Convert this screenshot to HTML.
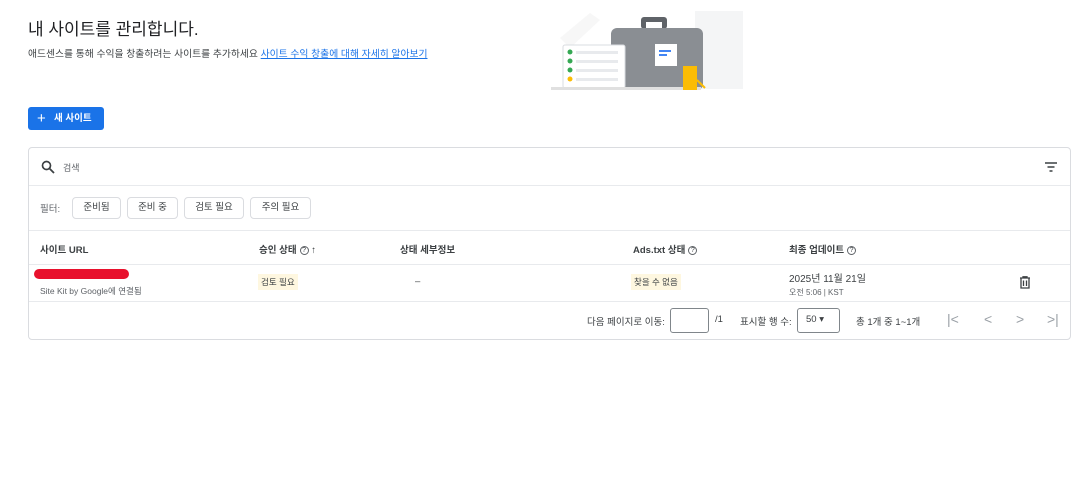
<!DOCTYPE html>
<html><head><meta charset="utf-8"><style>
*{box-sizing:border-box;margin:0;padding:0}
body{width:1086px;height:488px;background:#fff;font-family:"Liberation Sans","Noto Sans CJK KR",sans-serif;color:#202124;position:relative;overflow:hidden}
.abs{position:absolute}
h1{position:absolute;left:28px;top:15px;font-size:17px;font-weight:400;color:#202124}
.sub{left:28px;top:46px;font-size:9.8px;color:#3c4043}
.sub a{color:#1a73e8;text-decoration:underline}
.btn{left:28px;top:107px;width:76px;height:23px;background:#1a73e8;border-radius:3px;color:#fff;font-size:9.5px;font-weight:700;line-height:23px;padding-left:26px}
.card{left:28px;top:147px;width:1043px;height:193px;border:1px solid #dadce0;border-radius:4px}
.hl{position:absolute;left:0;right:0;height:1px;background:#e8eaed}
.chip{position:absolute;top:49px;height:22px;border:1px solid #dadce0;border-radius:4px;font-size:9.5px;line-height:20px;text-align:center;color:#3c4043}
.th{position:absolute;top:94px;font-size:9.5px;font-weight:700;color:#3c4043}
.q{display:inline-block;width:9px;height:9px;border:1px solid #5f6368;border-radius:50%;font-size:7px;line-height:7px;text-align:center;font-weight:400;vertical-align:middle;margin-left:3px}
.tag{position:absolute;background:#fef7e0;font-size:8.5px;color:#3c4043;padding:0 3px;height:16px;line-height:16px}
.ft{position:absolute;top:166px;font-size:9.5px;color:#3c4043}
.box{position:absolute;border:1px solid #80868b;border-radius:3px}
.nav{position:absolute;top:163px;font-size:14px;color:#9aa0a6}
</style></head><body>
<h1>내 사이트를 관리합니다.</h1>
<div class="abs sub">애드센스를 통해 수익을 창출하려는 사이트를 추가하세요 <a>사이트 수익 창출에 대해 자세히 알아보기</a></div>
<svg class="abs" style="left:545px;top:8px" width="200" height="84" viewBox="0 0 200 84">
<rect x="150" y="3" width="48" height="78" fill="#f4f5f6"/>
<path d="M15 30 L45 5 L55 12 L25 40Z" fill="#f7f7f7"/>
<rect x="96" y="9" width="26" height="12" rx="3" fill="#5f6368"/>
<rect x="101" y="14" width="16" height="7" fill="#fff"/>
<rect x="66" y="20" width="92" height="62" rx="6" fill="#8a8e93"/>
<rect x="110" y="36" width="22" height="22" fill="#fff"/>
<rect x="114" y="42" width="12" height="2" fill="#4285f4"/>
<rect x="114" y="46" width="8" height="2" fill="#4285f4"/>
<rect x="18" y="37" width="62" height="43" rx="2" fill="#fff" stroke="#dadce0"/>
<circle cx="25" cy="44" r="2.5" fill="#34a853"/><rect x="31" y="43" width="42" height="3" fill="#e8eaed"/>
<circle cx="25" cy="53" r="2.5" fill="#34a853"/><rect x="31" y="52" width="42" height="3" fill="#e8eaed"/>
<circle cx="25" cy="62" r="2.5" fill="#34a853"/><rect x="31" y="61" width="42" height="3" fill="#e8eaed"/>
<circle cx="25" cy="71" r="2.5" fill="#fbbc04"/><rect x="31" y="70" width="42" height="3" fill="#e8eaed"/>
<rect x="6" y="79" width="150" height="3" fill="#e0e0e0"/>
<rect x="138" y="58" width="14" height="24" fill="#fbbc04"/>
<path d="M152 72 L160 80" stroke="#fbbc04" stroke-width="2"/>
</svg>
<div class="abs btn"><span style="position:absolute;left:9px;top:0px;font-size:15px;font-weight:400">+</span>새 사이트</div>
<div class="abs card">
<svg style="position:absolute;left:12px;top:12px" width="14" height="14" viewBox="0 0 14 14"><circle cx="5.5" cy="5.5" r="4" fill="none" stroke="#3c4043" stroke-width="1.7"/><path d="M8.5 8.5 L13 13" stroke="#3c4043" stroke-width="1.8"/></svg>
<div style="position:absolute;left:34px;top:13px;font-size:9px;color:#5f6368">검색</div>
<svg style="position:absolute;left:1015px;top:13px" width="14" height="12"><path d="M1 2H13M3.5 6H10.5M5.5 10H8.5" stroke="#3c4043" stroke-width="1.5"/></svg>
<div class="hl" style="top:37px"></div>
<div style="position:absolute;left:11px;top:53px;font-size:9.5px;color:#5f6368">필터:</div>
<div class="chip" style="left:43px;width:49px">준비됨</div>
<div class="chip" style="left:98px;width:51px">준비 중</div>
<div class="chip" style="left:155px;width:60px">검토 필요</div>
<div class="chip" style="left:221px;width:61px">주의 필요</div>
<div class="hl" style="top:82px"></div>
<div class="th" style="left:11px">사이트 URL</div>
<div class="th" style="left:230px">승인 상태<span class="q">?</span> <span style="font-weight:400">↑</span></div>
<div class="th" style="left:371px">상태 세부정보</div>
<div class="th" style="left:604px">Ads.txt 상태<span class="q">?</span></div>
<div class="th" style="left:760px">최종 업데이트<span class="q">?</span></div>
<div class="hl" style="top:116px"></div>
<div style="position:absolute;left:5px;top:121px;width:95px;height:10px;border-radius:5px;background:#e8112d"></div>
<div style="position:absolute;left:11px;top:137px;font-size:8.5px;color:#5f6368">Site Kit by Google에 연결됨</div>
<div class="tag" style="left:229px;top:126px">검토 필요</div>
<div style="position:absolute;left:386px;top:128px;font-size:9.5px;color:#3c4043">–</div>
<div class="tag" style="left:602px;top:126px">찾을 수 없음</div>
<div style="position:absolute;left:760px;top:122px;font-size:10px;color:#3c4043">2025년 11월 21일</div>
<div style="position:absolute;left:760px;top:139px;font-size:8px;color:#5f6368">오전 5:06 | KST</div>
<svg style="position:absolute;left:990px;top:128px" width="12" height="13" viewBox="0 0 12 13"><path d="M1 2H11M4 2V0.8H8V2M2 2.5V12H10V2.5M4.5 4.5V10M7.5 4.5V10" fill="none" stroke="#3c4043" stroke-width="1.3"/></svg>
<div class="hl" style="top:153px"></div>
<div class="ft" style="left:558px">다음 페이지로 이동:</div>
<div class="box" style="left:641px;top:160px;width:39px;height:25px"></div>
<div class="ft" style="left:686px">/1</div>
<div class="ft" style="left:711px">표시할 행 수:</div>
<div class="box" style="left:768px;top:160px;width:43px;height:25px"></div>
<div class="ft" style="left:777px">50 ▾</div>
<div class="ft" style="left:827px">총 1개 중 1~1개</div>
<div class="nav" style="left:918px">|&lt;</div>
<div class="nav" style="left:955px">&lt;</div>
<div class="nav" style="left:987px">&gt;</div>
<div class="nav" style="left:1018px">&gt;|</div>
</div>
</body></html>
